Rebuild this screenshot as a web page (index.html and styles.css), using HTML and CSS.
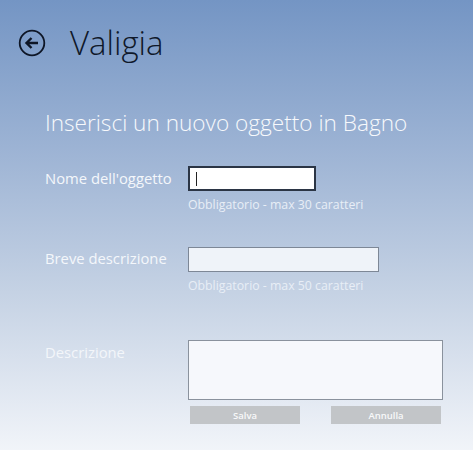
FILE: index.html
```html
<!DOCTYPE html>
<html lang="it">
<head>
<meta charset="utf-8">
<link rel="stylesheet" href="styles.css">
</head>
<body>
<div class="page">
  <header class="header">
    <svg class="back" width="28" height="28" viewBox="0 0 28 28">
      <circle cx="14" cy="14" r="12.3" fill="none" stroke="#0e1626" stroke-width="1.8"/>
      <path d="M20 14H8.5M13.5 9L8.5 14L13.5 19" fill="none" stroke="#0e1626" stroke-width="2.4"/>
    </svg>
    <h1 class="title">Valigia</h1>
  </header>
  <h2 class="subtitle">Inserisci un nuovo oggetto in Bagno</h2>
  <div class="field field-name">
    <label class="label">Nome dell'oggetto</label>
    <div class="control">
      <div class="input input-active"><span class="caret"></span></div>
      <div class="hint">Obbligatorio - max 30 caratteri</div>
    </div>
  </div>
  <div class="field field-short">
    <label class="label">Breve descrizione</label>
    <div class="control">
      <div class="input input-short"></div>
      <div class="hint">Obbligatorio - max 50 caratteri</div>
    </div>
  </div>
  <div class="field field-desc">
    <label class="label label-faint">Descrizione</label>
    <div class="control">
      <div class="textarea"></div>
      <div class="buttons">
        <button class="btn">Salva</button>
        <button class="btn">Annulla</button>
      </div>
    </div>
  </div>
</div>
</body>
</html>
```
FILE: styles.css
```css
html, body {
  margin: 0;
  padding: 0;
}
body {
  width: 473px;
  height: 450px;
  overflow: hidden;
  font-family: "Open Sans", "Noto Sans", sans-serif;
}
.page {
  height: 450px;
  background: linear-gradient(to bottom, #7495c4 0%, #9fb5d5 35%, #c5d2e4 65%, #f1f4f9 100%);
  box-sizing: border-box;
  padding-top: 28px;
}
.header {
  display: flex;
  align-items: center;
  padding-left: 18px;
  height: 30px;
}
.back {
  display: block;
}
.title {
  margin: 0 0 0 24px;
  font-weight: 300;
  font-size: 33px;
  line-height: 30px;
  color: #0f1829;
}
.subtitle {
  margin: 50px 0 0 45px;
  font-weight: 300;
  font-size: 22.6px;
  line-height: 30px;
  color: #f7f9fc;
}
.field {
  display: grid;
  grid-template-columns: 143px 1fr;
  padding-left: 45px;
}
.label {
  font-size: 14.8px;
  line-height: 20px;
  color: #f4f7fb;
}
.label-faint {
  color: #f3f6fa;
}
.field-name {
  margin-top: 28px;
}
.field-name .label {
  padding-top: 2px;
}
.field-short {
  margin-top: 34px;
}
.field-short .label {
  padding-top: 1px;
}
.field-desc {
  margin-top: 46px;
}
.field-desc .label {
  padding-top: 2px;
}
.input {
  box-sizing: border-box;
  height: 25px;
}
.input-active {
  width: 128px;
  background: #ffffff;
  border: 2px solid #2b3545;
  padding: 4px 0 0 6px;
}
.caret {
  display: block;
  width: 1px;
  height: 14px;
  background: #222;
}
.input-short {
  width: 191px;
  background: #eff3f9;
  border: 1px solid #7d8796;
}
.hint {
  margin-top: 6px;
  font-size: 12.3px;
  line-height: 16px;
  color: #e8eef6;
}
.textarea {
  box-sizing: border-box;
  width: 255px;
  height: 60px;
  background: #f6f8fc;
  border: 1px solid #8a929d;
}
.buttons {
  display: flex;
  justify-content: space-between;
  width: 253px;
  padding-left: 2px;
  box-sizing: border-box;
  margin-top: 6px;
}
.btn {
  width: 110px;
  height: 18px;
  border: none;
  background: #c2c5c8;
  color: #f8f9fa;
  font-family: "Open Sans", sans-serif;
  font-size: 9.5px;
  font-weight: 600;
  padding: 0;
}
```
